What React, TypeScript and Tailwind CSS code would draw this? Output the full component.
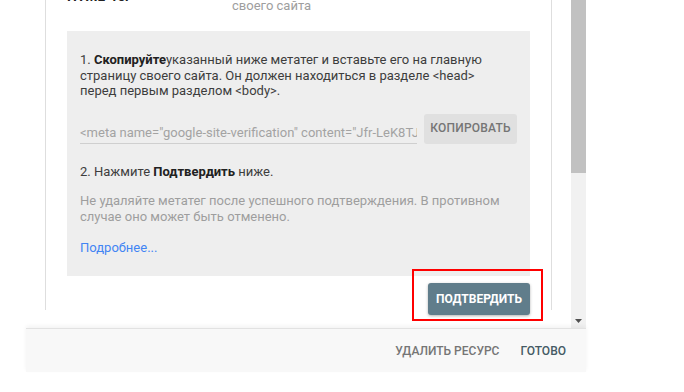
import { ReactNode } from "react";

function GrayButton({ children }: { children: ReactNode }) {
  return (
    <button className="h-[30px] w-[93px] shrink-0 rounded-[3px] bg-[#e0e0e0] text-[12px] font-medium uppercase tracking-[0.2px] text-[#757575]">
      {children}
    </button>
  );
}

export default function App() {
  return (
    <div className="relative h-[392px] w-[684px] overflow-hidden bg-white font-['Roboto','Liberation_Sans',sans-serif]">
      <div className="ml-[26px] flex w-[560px] flex-col">
        {/* Scroll area */}
        <div className="flex h-[328px]">
          <div className="w-[545px] overflow-hidden">
            <div className="ml-[19px] h-full w-[507px] border-x border-[#dedede] px-[21px]">
              {/* Row scrolled out of view */}
              <div className="-mt-[18px] flex">
                <div className="mt-[6px] w-[165px] text-[14px] font-bold leading-[16px] text-[#212121]">
                  HTML-тег
                </div>
                <div className="text-[13px] leading-[16px] text-[#9e9e9e]">
                  Добавьте метатег на главную страницу
                  <br />
                  своего сайта
                </div>
              </div>

              {/* Instructions */}
              <div className="mt-[17px] bg-[#eeeeee] px-[13px] pb-[20px] pt-[21px] text-[13px] leading-[15.5px] text-[#3d3d3d]">
                <p>
                  1. <b className="font-bold text-[#212121]">Скопируйте</b>
                  указанный ниже метатег и вставьте его на главную
                  <br />
                  страницу своего сайта. Он должен находиться в разделе &lt;head&gt;
                  <br />
                  перед первым разделом &lt;body&gt;.
                </p>

                <div className="mt-[15px] flex items-end gap-[7px]">
                  <div className="flex h-[30px] min-w-0 flex-1 items-end overflow-hidden border-b border-[#cfcfcf] pb-[3px] leading-[15px] text-[#a3a3a3]">
                    <span className="block w-full overflow-hidden whitespace-nowrap">
                      &lt;meta name="google-site-verification" content="Jfr-LeK8TJxQ2mW9vRbN4pZ" /&gt;
                    </span>
                  </div>
                  <GrayButton>Копировать</GrayButton>
                </div>

                <p className="mt-[20px]">
                  2. Нажмите <b className="font-bold text-[#212121]">Подтвердить</b> ниже.
                </p>

                <p className="mt-[14px] text-[#9e9e9e]">
                  Не удаляйте метатег после успешного подтверждения. В противном
                  <br />
                  случае оно может быть отменено.
                </p>

                <p className="mt-[16px]">
                  <a className="text-[#4285f4]">Подробнее...</a>
                </p>
              </div>

              <div className="mt-[7px] flex justify-end">
                <button className="h-[32px] w-[102px] rounded-[3px] bg-[#607d8b] text-[12px] font-bold uppercase text-white shadow-[0_1px_3px_rgba(0,0,0,0.3)]">
                  Подтвердить
                </button>
              </div>
            </div>
          </div>

          {/* Scrollbar */}
          <div className="flex w-[15px] flex-col bg-[#f1f1f1]">
            <div className="h-[173px] bg-[#c1c1c1]" />
            <div className="flex-1" />
            <div className="flex h-[15px] items-center justify-center">
              <svg width="7" height="4" viewBox="0 0 7 4">
                <path d="M0 0h7L3.5 4z" fill="#505050" />
              </svg>
            </div>
          </div>
        </div>

        {/* Footer */}
        <div className="relative flex h-[44px] items-center justify-end gap-[21px] border-t border-[#e2e2e2] bg-[#f8f8f8] pr-[20px] shadow-[0_-2px_4px_rgba(0,0,0,0.05)]">
          <button className="text-[12px] font-medium uppercase text-[#757575]">
            Удалить ресурс
          </button>
          <button className="text-[12px] font-medium uppercase text-[#455a64]">
            Готово
          </button>
        </div>
      </div>

      {/* Annotation */}
      <div className="absolute left-[412px] top-[269px] h-[52px] w-[131px] border-2 border-[#ff0000]" />
    </div>
  );
}
